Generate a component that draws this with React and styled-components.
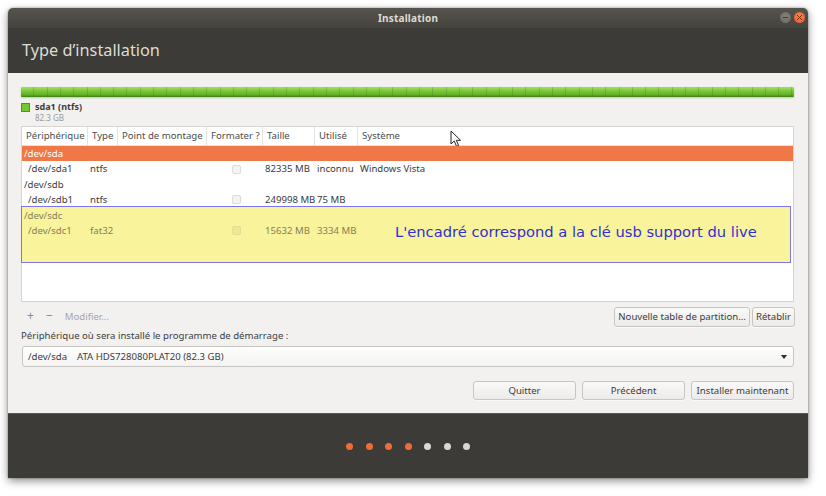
// Core
import React from "react";
import styled, { createGlobalStyle } from "styled-components";

const GlobalStyle = createGlobalStyle`
  html, body {
    margin: 0;
    padding: 0;
    background: #ffffff;
  }
  body {
    font-family: "Noto Sans", "DejaVu Sans", sans-serif;
    color: #3c3c3c;
  }
`;

const columns = [
  "Périphérique",
  "Type",
  "Point de montage",
  "Formater ?",
  "Taille",
  "Utilisé",
  "Système",
];

const rows = [
  { dev: "/dev/sda", selected: true },
  { dev: "/dev/sda1", type: "ntfs", check: true, size: "82335 MB", used: "inconnu", system: "Windows Vista", child: true },
  { dev: "/dev/sdb" },
  { dev: "/dev/sdb1", type: "ntfs", check: true, size: "249998 MB", used: "75 MB", child: true },
  { dev: "/dev/sdc", muted: true },
  { dev: "/dev/sdc1", type: "fat32", check: true, size: "15632 MB", used: "3334 MB", child: true, muted: true },
];

const dots = [true, true, true, true, false, false, false];

const App = () => {
  return (
    <>
      <GlobalStyle />
      <Page>
        <Window>
          <TitleBar>
            <span className="title">Installation</span>
            <div className="controls">
              <WinButton kind="min">
                <span />
              </WinButton>
              <WinButton kind="close">
                <span />
              </WinButton>
            </div>
          </TitleBar>
          <Header>Type d’installation</Header>

          <Content>
            <DiskBar />
            <Legend>
              <div className="swatch" />
              <div>
                <div className="name">sda1 (ntfs)</div>
                <div className="size">82.3 GB</div>
              </div>
            </Legend>

            <Table>
              <HeaderRow>
                {columns.map((c) => (
                  <HeadCell key={c}>{c}</HeadCell>
                ))}
                <Cursor viewBox="0 0 12 18" width="12" height="18">
                  <path
                    d="M1 1 L1 14 L4.2 11 L6.6 16.4 L8.6 15.5 L6.3 10.3 L10.6 10.3 Z"
                    fill="#ffffff"
                    stroke="#222"
                    strokeWidth="1"
                    strokeLinejoin="round"
                  />
                </Cursor>
              </HeaderRow>
              <Body>
                <Annotation>
                  L'encadré correspond a la clé usb support du live
                </Annotation>
                {rows.map((r) => (
                  <Row key={r.dev} selected={r.selected} muted={r.muted}>
                    <Cell child={r.child}>{r.dev}</Cell>
                    <Cell>{r.type}</Cell>
                    <Cell />
                    <Cell center>{r.check && <Check muted={r.muted} />}</Cell>
                    <Cell>{r.size}</Cell>
                    <Cell>{r.used}</Cell>
                    <Cell>{r.system}</Cell>
                  </Row>
                ))}
              </Body>
            </Table>

            <Toolbar>
              <div className="actions">
                <span className="sym">+</span>
                <span className="sym">−</span>
                <span>Modifier...</span>
              </div>
              <ButtonGroup>
                <Button>Nouvelle table de partition...</Button>
                <Button>Rétablir</Button>
              </ButtonGroup>
            </Toolbar>

            <Label>Périphérique où sera installé le programme de démarrage :</Label>
            <Combo>
              <span>
                /dev/sda&nbsp;&nbsp;&nbsp; ATA HDS728080PLAT20 (82.3 GB)
              </span>
              <span className="arrow" />
            </Combo>

            <NavButtons>
              <Button wide>Quitter</Button>
              <Button wide>Précédent</Button>
              <Button wide>Installer maintenant</Button>
            </NavButtons>
          </Content>

          <Footer>
            {dots.map((done, i) => (
              <Dot key={i} done={done} />
            ))}
          </Footer>
        </Window>
      </Page>
    </>
  );
};

const Page = styled.div`
  width: 826px;
  height: 496px;
  padding: 8px 0 0 8px;
  box-sizing: border-box;
`;

const Window = styled.div`
  width: 800px;
  height: 470px;
  display: flex;
  flex-direction: column;
  background: #f2f1f0;
  border-radius: 5px 5px 0 0;
  overflow: hidden;
  box-shadow: 0 3px 9px rgba(0, 0, 0, 0.45), 0 0 2px rgba(0, 0, 0, 0.4);
`;

const TitleBar = styled.div`
  height: 20px;
  flex: none;
  display: flex;
  align-items: center;
  justify-content: center;
  position: relative;
  background: linear-gradient(#57544e, #45433e);
  .title {
    font-size: 10px;
    font-weight: 700;
    color: #dfdbd2;
    letter-spacing: 0.2px;
  }
  .controls {
    position: absolute;
    right: 3px;
    top: 4px;
    display: flex;
    gap: 3px;
  }
`;

const WinButton = styled.div`
  width: 11px;
  height: 11px;
  border-radius: 50%;
  display: flex;
  align-items: center;
  justify-content: center;
  background: ${({ kind }) =>
    kind === "close"
      ? "radial-gradient(circle at 50% 40%, #f58a5a, #e5541b)"
      : "radial-gradient(circle at 50% 40%, #86837d, #66635e)"};
  span {
    width: 5px;
    height: ${({ kind }) => (kind === "close" ? "5px" : "1px")};
    background: ${({ kind }) => (kind === "close" ? "none" : "#3c3b37")};
    ${({ kind }) =>
      kind === "close" &&
      `background: linear-gradient(45deg, transparent 42%, #7a2a08 42% 58%, transparent 58%),
       linear-gradient(-45deg, transparent 42%, #7a2a08 42% 58%, transparent 58%);`}
  }
`;

const Header = styled.div`
  height: 45px;
  flex: none;
  box-sizing: border-box;
  padding: 11px 0 0 14px;
  background: #3c3b37;
  color: #dfdbd2;
  font-size: 16.3px;
  font-weight: 400;
`;

const Content = styled.div`
  flex: 1;
  display: flex;
  flex-direction: column;
  padding: 14px 14px 0 13px;
  box-sizing: border-box;
`;

const DiskBar = styled.div`
  height: 10px;
  border-radius: 1px;
  background: repeating-linear-gradient(
      90deg,
      rgba(255, 255, 255, 0) 0 12.3px,
      rgba(60, 110, 20, 0.25) 12.3px 13.3px
    ),
    linear-gradient(#a2de67, #78c535 45%, #64b326 75%, #3f7d12);
  box-shadow: 0 1px 2px rgba(80, 140, 30, 0.35);
`;

const Legend = styled.div`
  display: flex;
  gap: 5px;
  margin-top: 5px;
  height: 24px;
  .swatch {
    width: 7px;
    height: 7px;
    margin-top: 1px;
    background: #73c62c;
    border: 0.5px solid #4e9a06;
  }
  .name {
    font-size: 9px;
    font-weight: 700;
    color: #3c3c3c;
    line-height: 10px;
  }
  .size {
    font-size: 8px;
    color: #9a9a9a;
    line-height: 11px;
  }
`;

const Table = styled.div`
  height: 176px;
  flex: none;
  box-sizing: border-box;
  border: 1px solid #d6d4d0;
  background: #ffffff;
  display: flex;
  flex-direction: column;
`;

const grid = `
  display: grid;
  grid-template-columns: 66px 30px 89px 56px 52px 43px 1fr;
`;

const HeaderRow = styled.div`
  ${grid}
  height: 18px;
  position: relative;
  border-bottom: 1px solid #e4e2de;
`;

const HeadCell = styled.div`
  font-size: 9.6px;
  color: #4c4c4c;
  line-height: 18px;
  padding-left: 4px;
  border-right: 1px solid #e6e4e0;
  white-space: nowrap;
  overflow: hidden;
  &:last-of-type {
    border-right: none;
  }
`;

const Cursor = styled.svg`
  position: absolute;
  left: 428px;
  top: 3px;
`;

const Body = styled.div`
  position: relative;
  flex: 1;
`;

const Row = styled.div`
  ${grid}
  height: 15.4px;
  position: relative;
  z-index: 1;
  font-size: 9.6px;
  line-height: 15.4px;
  background: ${({ selected }) => (selected ? "#f07746" : "transparent")};
  color: ${({ selected, muted }) =>
    selected ? "#ffffff" : muted ? "#85805a" : "#3c3c3c"};
  &:first-child {
    height: 16px;
  }
`;

const Cell = styled.div`
  padding-left: ${({ child }) => (child ? "6px" : "2px")};
  white-space: nowrap;
  display: flex;
  align-items: center;
  justify-content: ${({ center }) => (center ? "center" : "flex-start")};
`;

const Check = styled.div`
  width: 9px;
  height: 9px;
  box-sizing: border-box;
  border-radius: 2px;
  border: 1px solid ${({ muted }) => (muted ? "#e4dd98" : "#dedcd8")};
  background: ${({ muted }) => (muted ? "#eee88f" : "#f4f3f1")};
`;

const Annotation = styled.div`
  position: absolute;
  left: -1px;
  top: 60px;
  width: 770px;
  height: 57px;
  box-sizing: border-box;
  border: 1px solid #7b74ec;
  background: #f9f39b;
  z-index: 0;
  padding: 16px 0 0 373px;
  font-family: "DejaVu Sans", sans-serif;
  font-size: 14.7px;
  color: #2f2fd8;
  white-space: nowrap;
`;

const Toolbar = styled.div`
  display: flex;
  justify-content: space-between;
  align-items: center;
  margin-top: 4px;
  height: 21px;
  .actions {
    display: flex;
    gap: 12px;
    padding-left: 6px;
    font-size: 9.6px;
    color: #a5a5a5;
  }
  .sym {
    font-size: 12px;
    line-height: 12px;
    color: #8a8a8a;
  }
`;

const ButtonGroup = styled.div`
  display: flex;
  gap: 2px;
  margin-right: -1px;
`;

const Button = styled.button`
  height: ${({ wide }) => (wide ? "19px" : "20px")};
  width: ${({ wide }) => (wide ? "103px" : "auto")};
  padding: 0 ${({ wide }) => (wide ? "4px" : "3px")};
  box-sizing: border-box;
  border: 1px solid #c8c6c2;
  border-radius: 3px;
  background: linear-gradient(#f9f9f8, #ecebe9);
  font-family: "Noto Sans", "DejaVu Sans", sans-serif;
  font-size: 9.6px;
  color: #3c3c3c;
  white-space: nowrap;
  box-shadow: 0 1px 0 rgba(255, 255, 255, 0.6);
`;

const Label = styled.div`
  margin-top: 3px;
  font-size: 9.6px;
  line-height: 12px;
  color: #3c3c3c;
`;

const Combo = styled.div`
  margin-top: 4px;
  height: 21px;
  box-sizing: border-box;
  border: 1px solid #c8c6c2;
  border-radius: 3px;
  background: linear-gradient(#ffffff, #f4f3f2);
  display: flex;
  align-items: center;
  justify-content: space-between;
  padding: 0 6px 0 5px;
  margin-left: 1px;
  font-size: 9.6px;
  color: #3c3c3c;
  .arrow {
    width: 0;
    height: 0;
    border-left: 3.5px solid transparent;
    border-right: 3.5px solid transparent;
    border-top: 4px solid #2c2c2c;
  }
`;

const NavButtons = styled.div`
  display: flex;
  justify-content: flex-end;
  gap: 6px;
  margin-top: 14px;
`;

const Footer = styled.div`
  height: 65px;
  flex: none;
  background: #3c3b37;
  display: flex;
  align-items: center;
  justify-content: center;
  gap: 12.5px;
  border-top: 1px solid #5a5853;
  box-sizing: border-box;
`;

const Dot = styled.div`
  width: 7px;
  height: 7px;
  border-radius: 50%;
  background: ${({ done }) => (done ? "#ec6d35" : "#d8d8d6")};
`;

export default App;
